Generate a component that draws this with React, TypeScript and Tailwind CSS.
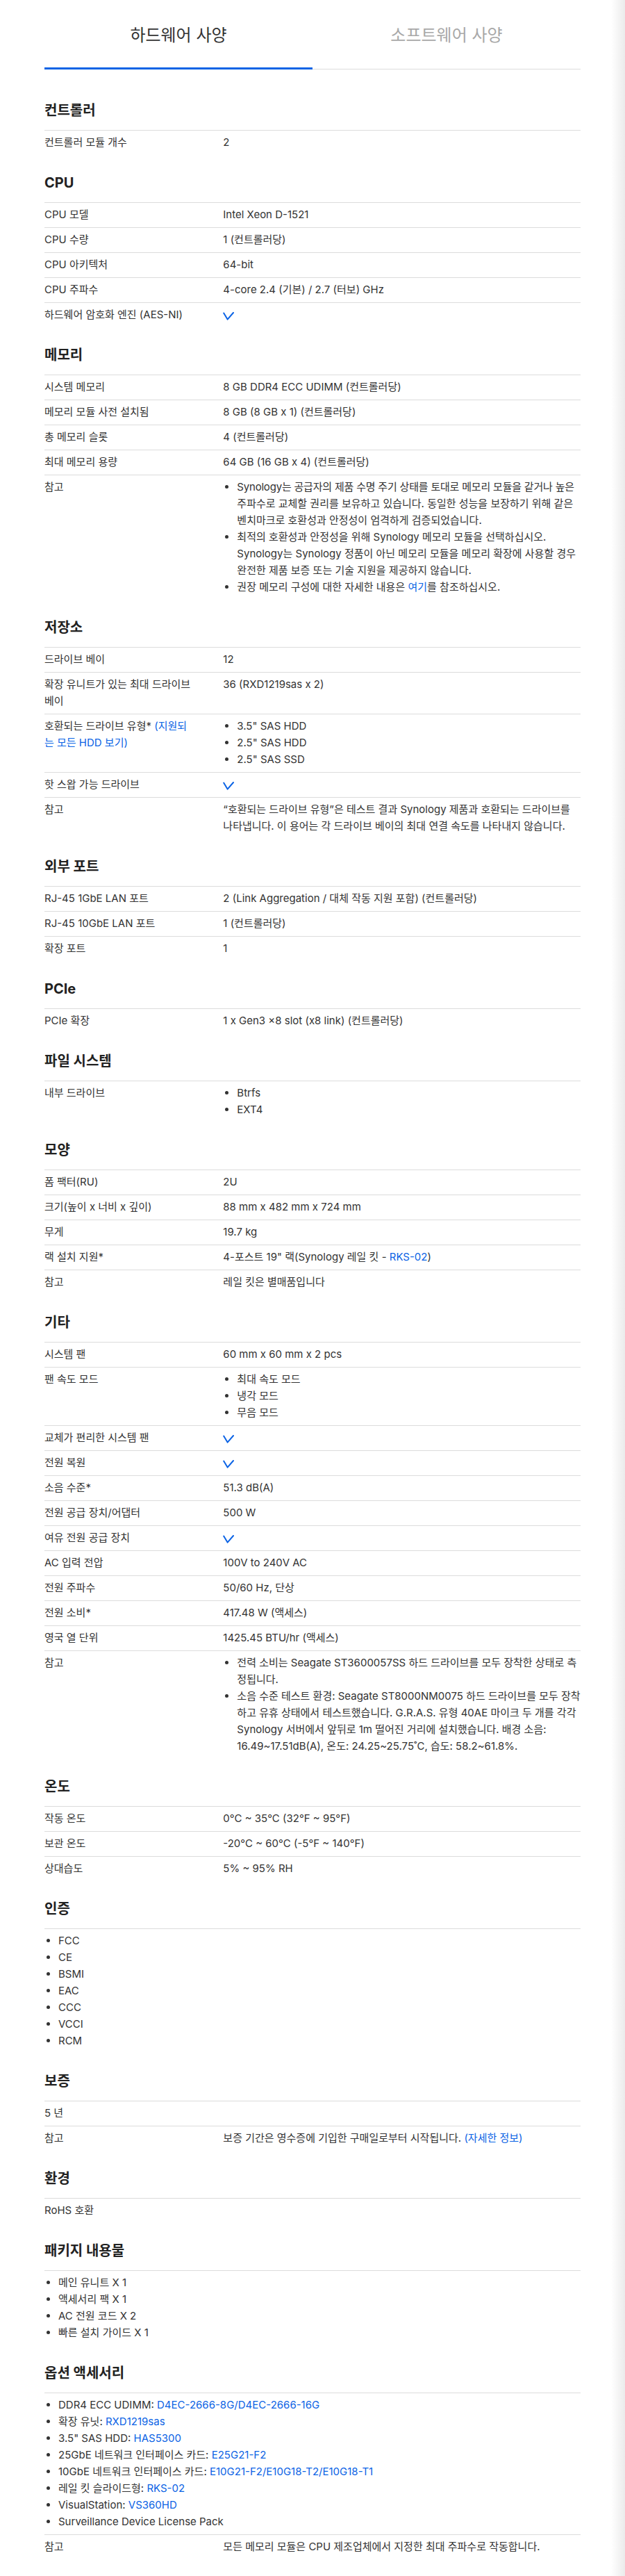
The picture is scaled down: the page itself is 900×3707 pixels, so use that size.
import React from "react";

const BLUE = "text-[#0b63e5]";

function Check() {
  return (
    <svg width="16" height="12" viewBox="0 0 16 12" className="block mt-[8px]">
      <path
        d="M1.2 1.6 L6.6 10.6 L15 1"
        fill="none"
        stroke="#0b63e5"
        strokeWidth="2"
        strokeLinecap="round"
        strokeLinejoin="round"
      />
    </svg>
  );
}

function A({ children }: { children: React.ReactNode }) {
  return <span className={BLUE}>{children}</span>;
}

function List({ items }: { items: React.ReactNode[] }) {
  return (
    <ul className="list-disc pl-[20px]">
      {items.map((it, i) => (
        <li key={i}>{it}</li>
      ))}
    </ul>
  );
}

function Row({ label, children }: { label?: React.ReactNode; children?: React.ReactNode }) {
  return (
    <div className="flex border-t border-[#dcdcdc] pt-[5px] pb-[6px]">
      <div className="w-1/3 shrink-0 pr-[43px]">{label}</div>
      <div className="flex-1 min-w-0">{children}</div>
    </div>
  );
}

function Full({ children }: { children: React.ReactNode }) {
  return <div className="border-t border-[#dcdcdc] pt-[5px] pb-[6px]">{children}</div>;
}

function Section({ title, children, first }: { title: string; children: React.ReactNode; first?: boolean }) {
  return (
    <section className={first ? "mt-[45px]" : "mt-[26px]"}>
      <h2 className="text-[20px] leading-[28px] font-bold text-[#222] mb-[14px]">{title}</h2>
      <div>{children}</div>
    </section>
  );
}

export default function App() {
  return (
    <div
      className="relative bg-white text-[#333] text-[15px] leading-[24px]"
      style={{ fontFamily: 'Inter, "Noto Sans CJK KR", "Noto Sans", sans-serif' }}
    >
      <div className="px-[64px] pb-[27px]">
        <div className="flex border-b border-[#dcdcdc]">
          <div className="flex-1 h-[100px] -mb-px flex items-center justify-center pt-[4px] border-b-[3px] border-[#0b63e5] text-[24px] text-[#333]">
            <span>하드웨어 사양</span>
          </div>
          <div className="flex-1 h-[100px] -mb-px flex items-center justify-center pt-[4px] border-b-[3px] border-transparent text-[24px] text-[#a8a8a8]">
            <span>소프트웨어 사양</span>
          </div>
        </div>

        <Section title="컨트롤러" first>
          <Row label="컨트롤러 모듈 개수">2</Row>
        </Section>

        <Section title="CPU">
          <Row label="CPU 모델">Intel Xeon D-1521</Row>
          <Row label="CPU 수량">1 (컨트롤러당)</Row>
          <Row label="CPU 아키텍처">64-bit</Row>
          <Row label="CPU 주파수">4-core 2.4 (기본) / 2.7 (터보) GHz</Row>
          <Row label="하드웨어 암호화 엔진 (AES-NI)">
            <Check />
          </Row>
        </Section>

        <Section title="메모리">
          <Row label="시스템 메모리">8 GB DDR4 ECC UDIMM (컨트롤러당)</Row>
          <Row label="메모리 모듈 사전 설치됨">8 GB (8 GB x 1) (컨트롤러당)</Row>
          <Row label="총 메모리 슬롯">4 (컨트롤러당)</Row>
          <Row label="최대 메모리 용량">64 GB (16 GB x 4) (컨트롤러당)</Row>
          <Row label="참고">
            <List
              items={[
                <>
                  <span className="tracking-[-0.2px]">
                    Synology는 공급자의 제품 수명 주기 상태를 토대로 메모리 모듈을 같거나 높은
                  </span>{" "}
                  주파수로 교체할 권리를 보유하고 있습니다. 동일한 성능을 보장하기 위해 같은 벤치마크로 호환성과 안정성이 엄격하게 검증되었습니다.
                </>,
                "최적의 호환성과 안정성을 위해 Synology 메모리 모듈을 선택하십시오. Synology는 Synology 정품이 아닌 메모리 모듈을 메모리 확장에 사용할 경우 완전한 제품 보증 또는 기술 지원을 제공하지 않습니다.",
                <>
                  권장 메모리 구성에 대한 자세한 내용은 <A>여기</A>를 참조하십시오.
                </>,
              ]}
            />
          </Row>
        </Section>

        <Section title="저장소">
          <Row label="드라이브 베이">12</Row>
          <Row label="확장 유니트가 있는 최대 드라이브 베이">36 (RXD1219sas x 2)</Row>
          <Row
            label={
              <>
                호환되는 드라이브 유형* <A>(지원되</A>
                <A>는 모든 HDD 보기)</A>
              </>
            }
          >
            <List items={['3.5" SAS HDD', '2.5" SAS HDD', '2.5" SAS SSD']} />
          </Row>
          <Row label="핫 스왑 가능 드라이브">
            <Check />
          </Row>
          <Row label="참고">
            “호환되는 드라이브 유형”은 테스트 결과 Synology 제품과 호환되는 드라이브를 나타냅니다. 이 용어는 각 드라이브 베이의 최대 연결 속도를 나타내지 않습니다.
          </Row>
        </Section>

        <Section title="외부 포트">
          <Row label="RJ-45 1GbE LAN 포트">2 (Link Aggregation / 대체 작동 지원 포함) (컨트롤러당)</Row>
          <Row label="RJ-45 10GbE LAN 포트">1 (컨트롤러당)</Row>
          <Row label="확장 포트">1</Row>
        </Section>

        <Section title="PCIe">
          <Row label="PCIe 확장">1 x Gen3 ×8 slot (x8 link) (컨트롤러당)</Row>
        </Section>

        <Section title="파일 시스템">
          <Row label="내부 드라이브">
            <List items={["Btrfs", "EXT4"]} />
          </Row>
        </Section>

        <Section title="모양">
          <Row label="폼 팩터(RU)">2U</Row>
          <Row label="크기(높이 x 너비 x 깊이)">88 mm x 482 mm x 724 mm</Row>
          <Row label="무게">19.7 kg</Row>
          <Row label="랙 설치 지원*">
            4-포스트 19" 랙(Synology 레일 킷 - <A>RKS-02</A>)
          </Row>
          <Row label="참고">레일 킷은 별매품입니다</Row>
        </Section>

        <Section title="기타">
          <Row label="시스템 팬">60 mm x 60 mm x 2 pcs</Row>
          <Row label="팬 속도 모드">
            <List items={["최대 속도 모드", "냉각 모드", "무음 모드"]} />
          </Row>
          <Row label="교체가 편리한 시스템 팬">
            <Check />
          </Row>
          <Row label="전원 복원">
            <Check />
          </Row>
          <Row label="소음 수준*">51.3 dB(A)</Row>
          <Row label="전원 공급 장치/어댑터">500 W</Row>
          <Row label="여유 전원 공급 장치">
            <Check />
          </Row>
          <Row label="AC 입력 전압">100V to 240V AC</Row>
          <Row label="전원 주파수">50/60 Hz, 단상</Row>
          <Row label="전원 소비*">417.48 W (액세스)</Row>
          <Row label="영국 열 단위">1425.45 BTU/hr (액세스)</Row>
          <Row label="참고">
            <List
              items={[
                "전력 소비는 Seagate ST3600057SS 하드 드라이브를 모두 장착한 상태로 측정됩니다.",
                "소음 수준 테스트 환경: Seagate ST8000NM0075 하드 드라이브를 모두 장착하고 유휴 상태에서 테스트했습니다. G.R.A.S. 유형 40AE 마이크 두 개를 각각 Synology 서버에서 앞뒤로 1m 떨어진 거리에 설치했습니다. 배경 소음: 16.49~17.51dB(A), 온도: 24.25~25.75˚C, 습도: 58.2~61.8%.",
              ]}
            />
          </Row>
        </Section>

        <Section title="온도">
          <Row label="작동 온도">0°C ~ 35°C (32°F ~ 95°F)</Row>
          <Row label="보관 온도">-20°C ~ 60°C (-5°F ~ 140°F)</Row>
          <Row label="상대습도">5% ~ 95% RH</Row>
        </Section>

        <Section title="인증">
          <Full>
            <List items={["FCC", "CE", "BSMI", "EAC", "CCC", "VCCI", "RCM"]} />
          </Full>
        </Section>

        <Section title="보증">
          <Row label="5 년" />
          <Row label="참고">
            보증 기간은 영수증에 기입한 구매일로부터 시작됩니다. <A>(자세한 정보)</A>
          </Row>
        </Section>

        <Section title="환경">
          <Full>RoHS 호환</Full>
        </Section>

        <Section title="패키지 내용물">
          <Full>
            <List items={["메인 유니트 X 1", "액세서리 팩 X 1", "AC 전원 코드 X 2", "빠른 설치 가이드 X 1"]} />
          </Full>
        </Section>

        <Section title="옵션 액세서리">
          <Full>
            <List
              items={[
                <>
                  DDR4 ECC UDIMM: <A>D4EC-2666-8G/D4EC-2666-16G</A>
                </>,
                <>
                  확장 유닛: <A>RXD1219sas</A>
                </>,
                <>
                  3.5" SAS HDD: <A>HAS5300</A>
                </>,
                <>
                  25GbE 네트워크 인터페이스 카드: <A>E25G21-F2</A>
                </>,
                <>
                  10GbE 네트워크 인터페이스 카드: <A>E10G21-F2/E10G18-T2/E10G18-T1</A>
                </>,
                <>
                  레일 킷 슬라이드형: <A>RKS-02</A>
                </>,
                <>
                  VisualStation: <A>VS360HD</A>
                </>,
                "Surveillance Device License Pack",
              ]}
            />
          </Full>
          <Row label="참고">모든 메모리 모듈은 CPU 제조업체에서 지정한 최대 주파수로 작동합니다.</Row>
        </Section>
      </div>
      <div className="absolute top-0 right-0 h-full w-[20px] bg-linear-to-r from-white to-[#ebebeb]" />
    </div>
  );
}
